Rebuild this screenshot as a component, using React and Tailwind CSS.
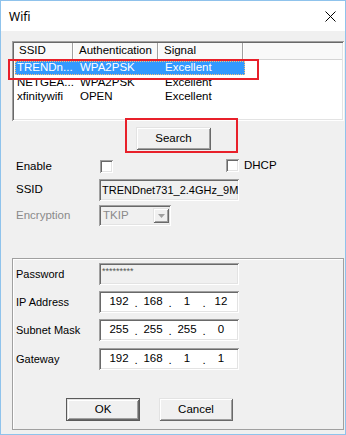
import React from "react";

const sunken =
  "shadow-[inset_1px_1px_0_#a0a0a0,inset_-1px_-1px_0_#ffffff,inset_2px_2px_0_#696969,inset_-2px_-2px_0_#e3e3e3]";
const raised =
  "shadow-[inset_1px_1px_0_#e3e3e3,inset_-1px_-1px_0_#696969,inset_2px_2px_0_#ffffff,inset_-2px_-2px_0_#a0a0a0]";

function Checkbox({ className = "" }) {
  return <div className={`w-[13px] h-[13px] bg-white shrink-0 ${sunken} ${className}`} />;
}

function IpBox({ parts }) {
  return (
    <div className={`w-[140px] h-[22px] bg-white flex items-center pl-[5px] ${sunken}`}>
      {parts.map((p, i) => (
        <React.Fragment key={i}>
          <span className="w-[30px] text-center text-[11.5px]">{p}</span>
          {i < 3 && <span className="w-[4px] text-center text-[11.5px] pt-[3px]">.</span>}
        </React.Fragment>
      ))}
    </div>
  );
}

function FieldRow({ label, children, className = "" }) {
  return (
    <div className={`flex items-center ${className}`}>
      <div className="w-[86px] pl-[3px] text-[11px]">{label}</div>
      {children}
    </div>
  );
}

export default function App() {
  return (
    <div className="w-[346px] h-[435px] bg-[#f0f0f0] border border-[#8fc3ec] flex flex-col font-['Liberation_Sans',Arial,sans-serif] text-[11px] text-black leading-none relative overflow-hidden">
      {/* Title bar */}
      <div className="h-[30px] bg-white flex items-center justify-between pl-[8px] pr-[9px] shrink-0">
        <span className="font-['Noto_Sans',sans-serif] text-[12px] leading-none mt-[1px]">Wifi</span>
        <svg width="11" height="11" viewBox="0 0 11 11" className="mt-[1px]">
          <path d="M0.5 0.5 L10.5 10.5 M10.5 0.5 L0.5 10.5" stroke="#000" strokeWidth="1" fill="none" />
        </svg>
      </div>

      <div className="pl-[11px] flex flex-col">
        {/* List view */}
        <div className={`mt-[10px] w-[332px] h-[80px] bg-white p-[2px] ${sunken}`}>
          <div className="h-[17px] flex bg-[#f9f9f9] border-b border-[#d5d5d5] text-[11.5px]">
            <div className="w-[59px] pl-[5px] flex items-center border-r border-[#a0a0a0]">SSID</div>
            <div className="w-[85px] pl-[6px] flex items-center border-r border-[#a0a0a0] shadow-[inset_1px_0_0_#ffffff]">Authentication</div>
            <div className="w-[85px] pl-[6px] flex items-center border-r border-[#a0a0a0] shadow-[inset_1px_0_0_#ffffff]">Signal</div>
            <div className="flex-1 shadow-[inset_1px_0_0_#ffffff]" />
          </div>
          <div className="mt-[1px] flex flex-col text-[11.5px]">
            <div className="ml-[1px] w-[230px] h-[14px] bg-[#3399ff] text-white flex items-center outline-1 outline-dotted outline-[#f5c27a] -outline-offset-1">
              <span className="w-[58px] pl-[2px]">TRENDn...</span>
              <span className="w-[85px] pl-[7px]">WPA2PSK</span>
              <span className="pl-[7px]">Excellent</span>
            </div>
            <div className="ml-[1px] h-[15px] flex items-center">
              <span className="w-[58px] pl-[2px]">NETGEA...</span>
              <span className="w-[85px] pl-[7px]">WPA2PSK</span>
              <span className="pl-[7px]">Excellent</span>
            </div>
            <div className="ml-[1px] h-[14px] flex items-center">
              <span className="w-[58px] pl-[2px]">xfinitywifi</span>
              <span className="w-[85px] pl-[7px]">OPEN</span>
              <span className="pl-[7px]">Excellent</span>
            </div>
          </div>
        </div>

        {/* Search */}
        <button className={`mt-[6px] ml-[124px] w-[75px] h-[23px] bg-[#f0f0f0] text-[11.5px] flex items-center justify-center ${raised}`}>
          Search
        </button>

        {/* Enable / DHCP */}
        <div className="mt-[9px] h-[14px] flex items-start">
          <div className="w-[88px] pl-[4px] text-[11.5px] mt-[2px]">Enable</div>
          <Checkbox className="mt-[1px]" />
          <Checkbox className="ml-[113px]" />
          <span className="ml-[5px] text-[11.5px] mt-[1px]">DHCP</span>
        </div>

        {/* SSID */}
        <div className="mt-[6px] flex items-center">
          <div className="w-[87px] pl-[4px] text-[11.5px]">SSID</div>
          <div className={`w-[140px] h-[22px] bg-[#f0f0f0] flex items-center pl-[3px] overflow-hidden whitespace-nowrap text-[11px] ${sunken}`}>
            TRENDnet731_2.4GHz_9M
          </div>
        </div>

        {/* Encryption */}
        <div className="mt-[4px] flex items-center">
          <div className="w-[87px] pl-[4px] text-[11.5px] text-[#8a8a8a]">Encryption</div>
          <div className={`w-[72px] h-[21px] bg-[#f0f0f0] flex items-center pl-[4px] pr-[2px] text-[11.5px] text-[#8a8a8a] ${sunken}`}>
            <span className="flex-1">TKIP</span>
            <div className={`w-[16px] h-[15px] bg-[#f0f0f0] flex items-center justify-center ${raised}`}>
              <svg width="7" height="4" viewBox="0 0 7 4">
                <path d="M0 0 L7 0 L3.5 4 Z" fill="#a0a0a0" />
              </svg>
            </div>
          </div>
        </div>

        {/* Group box */}
        <div className="mt-[32px] w-[332px] h-[172px] border border-[#a0a0a0] shadow-[inset_1px_1px_0_#ffffff] flex flex-col pt-[4px]">
          <FieldRow label="Password">
            <div className={`w-[140px] h-[22px] bg-[#f0f0f0] pl-[3px] pt-[4px] text-[9px] text-[#555] ${sunken}`}>
              *********
            </div>
          </FieldRow>
          <FieldRow label="IP Address" className="mt-[6px]">
            <IpBox parts={["192", "168", "1", "12"]} />
          </FieldRow>
          <FieldRow label="Subnet Mask" className="mt-[6px]">
            <IpBox parts={["255", "255", "255", "0"]} />
          </FieldRow>
          <FieldRow label="Gateway" className="mt-[7px]">
            <IpBox parts={["192", "168", "1", "1"]} />
          </FieldRow>

          <div className="mt-[28px] flex">
            <button className={`ml-[53px] w-[74px] h-[23px] bg-[#f0f0f0] border border-[#5a5a5a] text-[11.5px] flex items-center justify-center ${raised}`}>
              OK
            </button>
            <button className={`ml-[19px] w-[74px] h-[23px] bg-[#f0f0f0] text-[11.5px] flex items-center justify-center ${raised}`}>
              Cancel
            </button>
          </div>
        </div>
      </div>

      {/* Red annotation boxes */}
      <div className="absolute left-[7px] top-[58px] w-[251px] h-[21px] border-2 border-[#e8202a] pointer-events-none" />
      <div className="absolute left-[124px] top-[117px] w-[113px] h-[35px] border-2 border-[#e8202a] pointer-events-none" />
    </div>
  );
}
